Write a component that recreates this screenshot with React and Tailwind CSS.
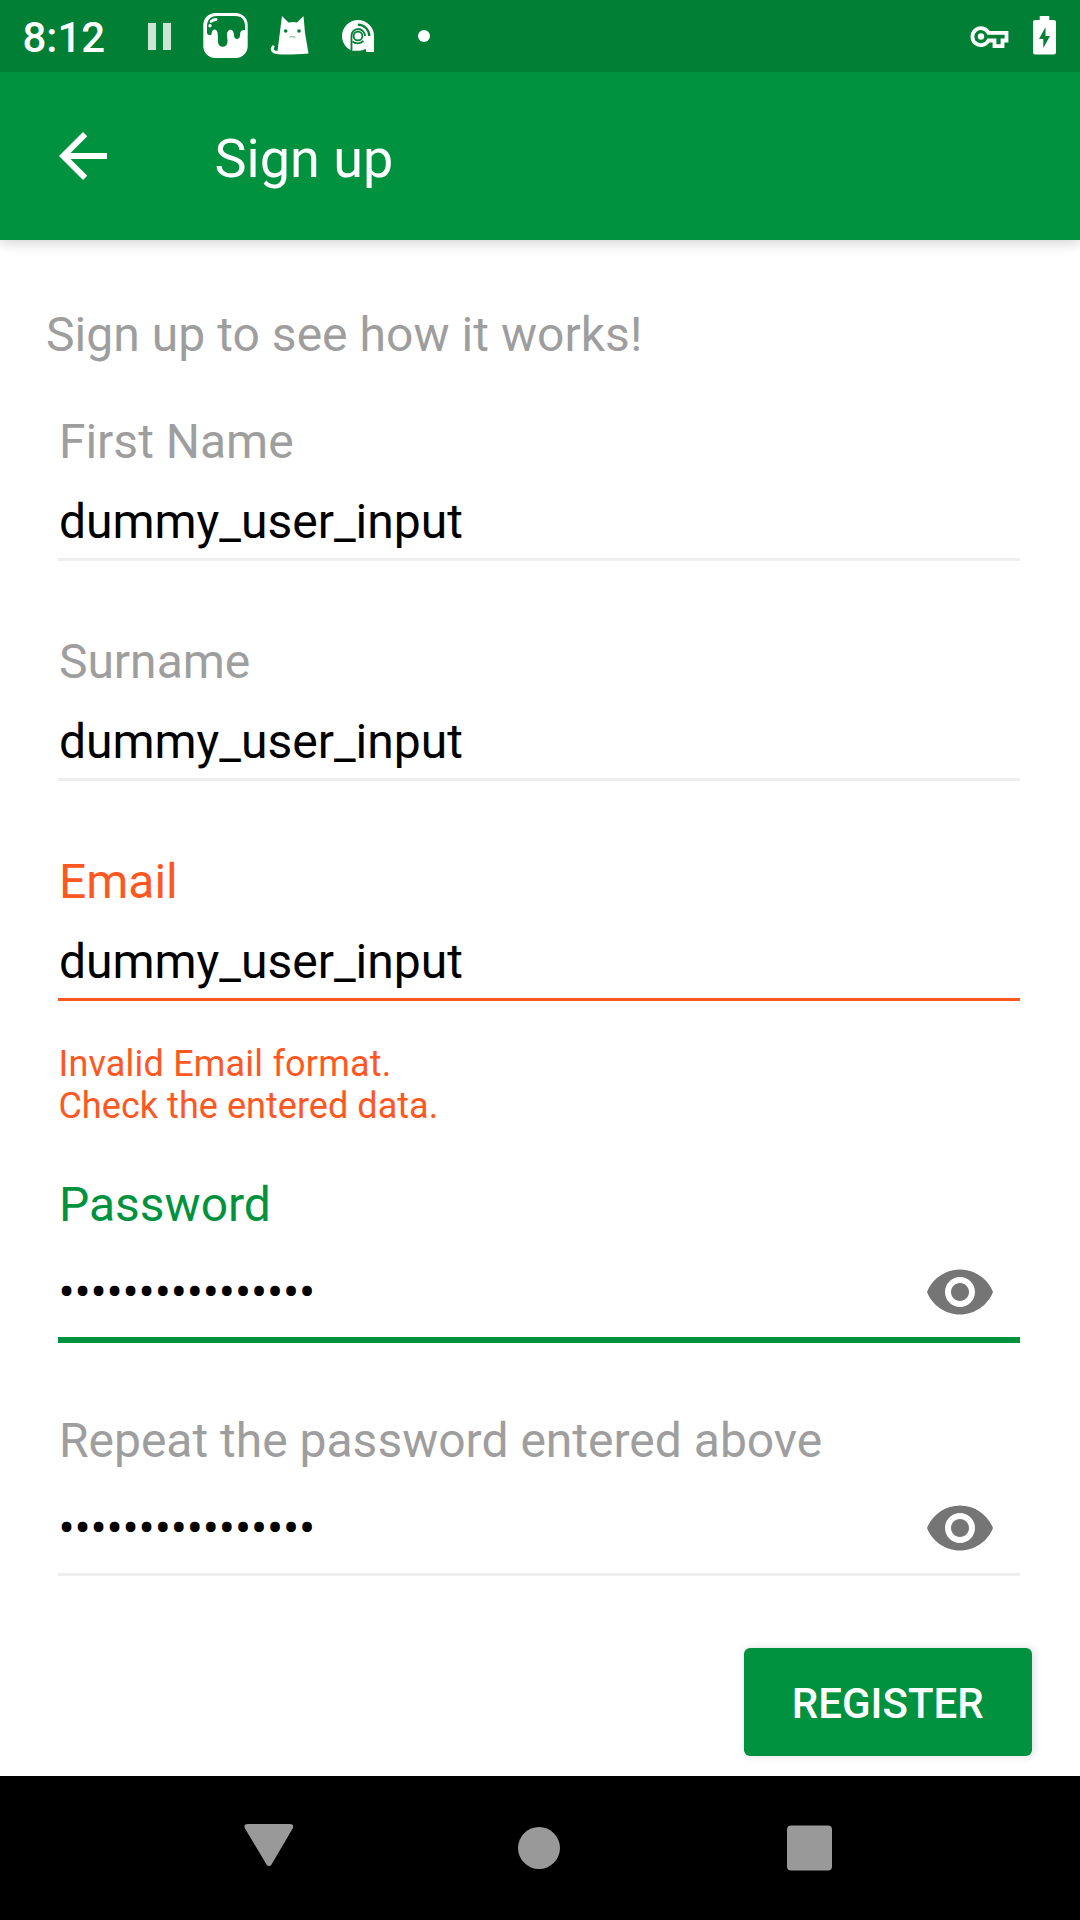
const labelTones = {
  idle: 'text-[#9e9e9e]',
  error: 'text-[#ff5722]',
  active: 'text-[#00923f]',
};

const lineTones = {
  idle: 'h-[3px] bg-[#eeeeee]',
  error: 'h-[3px] bg-[#ff5722]',
  active: 'h-[6px] bg-[#00923f]',
};

function StatusBar() {
  return (
    <header className="relative z-10 flex h-[72px] items-center bg-[#007f35] text-white">
      <div className="ml-[22.500px] w-[125.500px] pt-[3px] text-[42px] leading-[48px] font-medium">8:12</div>
      <svg className="h-[72px] w-[24px] shrink-0" viewBox="148 0 24 72" fill="#cce5d7">
        <path d="M148 23h8v27h-8zM163 23h8v27h-8z" />
      </svg>
      <svg className="ml-[30px] h-[72px] w-[48px] shrink-0" viewBox="202 0 48 72">
        <rect x="203.300" y="13" width="44.400" height="45" rx="12" fill="#fff" />
        <path
          d="M207 27c0-7 3-11 10-11h18c7 0 10 4 10 10v4c-4 0-5 2-5 5.500 0 4.500-6 4.500-6 0 0-8-7-7-7-1 0 3 .5 4 .5 7 0 7-9.500 7-9.500 0l-.2-7c-.3-7-6.300-6-6.300 0-1 1.500-4.500.5-4.500-2z"
          fill="#007f35"
        />
        <path d="M211 21.500q2.500-2 5-2" fill="none" stroke="#fff" strokeWidth="2.800" strokeLinecap="round" />
        <circle cx="210" cy="25.700" r="1.700" fill="#fff" />
      </svg>
      <svg className="ml-[20px] h-[72px] w-[40px] shrink-0" viewBox="270 0 40 72">
        <path
          d="M282 16l6.500 6.500q5.500-1.200 8.500 0l6.500-6.500 1.500 17 3.500 20.500q-19 1.500-30 .8c-8-.4-9.800-6-5.500-9.300l1.800 1.600c-2.500 2.800 0 4.200 2.700 4.400z"
          fill="#fff"
        />
        <circle cx="285.700" cy="31" r="1.800" fill="#007f35" />
        <circle cx="299" cy="31" r="1.800" fill="#007f35" />
        <path d="M289.500 37.300q1.500-1.300 3-.3 1.500-1 3 .3" fill="none" stroke="#68ae84" strokeWidth="1" />
      </svg>
      <svg className="ml-[30px] h-[72px] w-[36px] shrink-0" viewBox="340 0 36 72">
        <path d="M358 20a16 16 0 0 1 16 16v16h-16a16 16 0 0 1 0-32z" fill="#fff" />
        <g fill="none" stroke="#007f35">
          <path d="M351.500 52V36a6.500 6.500 0 0 1 6.500-6.800" strokeWidth="1.800" />
          <circle cx="358" cy="36" r="4.400" strokeWidth="1.800" />
          <path d="M358 29a7 7 0 0 1 7 7" strokeWidth="1.800" />
          <path d="M358 24.700a11.300 11.300 0 0 1 11.300 11.300" strokeWidth="2.200" />
          <path d="M352.500 41.500q5 4 11-.5" strokeWidth="1.800" />
        </g>
        <path d="M353 50.700h6q4 0 6.500-2l1 4h-13.500z" fill="#007f35" />
      </svg>
      <svg className="ml-[41px] h-[72px] w-[14px] shrink-0" viewBox="417 0 14 72">
        <circle cx="424" cy="36" r="6" fill="#fff" />
      </svg>
      <svg className="ml-auto h-[72px] w-[40px] shrink-0" viewBox="970 0 40 72">
        <path
          d="M988.500 32.800h18v7.700h-4v5.700h-8v-5.700h-6a8.500 8.500 0 1 1 0-7.700z"
          fill="none"
          stroke="#fff"
          strokeWidth="3.800"
        />
        <circle cx="981" cy="36.500" r="3.200" fill="#fff" />
      </svg>
      <svg className="mr-[20px] ml-[20px] h-[72px] w-[30px] shrink-0" viewBox="1030 0 30 72">
        <path
          fillRule="evenodd"
          d="M1039.700 16h9.600v4h4.500q2.200 0 2.200 2v30.500q0 2-2.200 2h-18.600q-2.200 0-2.200-2v-30.500q0-2 2.200-2h4.500zM1045.500 27l-6.500 12h4.300v9l6.700-12h-4.500z"
          fill="#fff"
        />
      </svg>
    </header>
  );
}

function AppBar() {
  return (
    <div className="flex h-[168px] items-center bg-[#00923f] text-white shadow-[0_3px_12px_rgba(0,0,0,0.18)]">
      <button aria-label="Back" className="ml-[46.500px]">
        <svg className="block h-[72px] w-[72px]" viewBox="0 0 24 24" fill="currentColor">
          <path d="M20 11H7.830l5.590-5.590L12 4l-8 8 8 8 1.410-1.410L7.830 13H20v-2z" />
        </svg>
      </button>
      <h1 className="ml-[96px] pt-[5px] text-[54px] leading-[64px] font-normal">Sign up</h1>
    </div>
  );
}

function EyeIcon() {
  return (
    <svg className="h-[72px] w-[72px]" viewBox="0 0 24 24" fill="#757575">
      <path d="M12 4.500C7 4.500 2.730 7.610 1 12c1.730 4.390 6 7.500 11 7.500s9.270-3.110 11-7.500c-1.730-4.390-6-7.500-11-7.500zM12 17c-2.760 0-5-2.240-5-5s2.240-5 5-5 5 2.240 5 5-2.240 5-5 5zm0-8c-1.660 0-3 1.340-3 3s1.340 3 3 3 3-1.340 3-3-1.340-3-3-3z" />
    </svg>
  );
}

function Field({ label, value, tone = 'idle', secret = false }) {
  return (
    <div>
      <div className={`h-14 pl-[0.500px] text-[48px] leading-[56px] ${labelTones[tone]}`}>{label}</div>
      {secret ? (
        <div className="flex h-[104px] items-center justify-between pt-[13px] pr-[24px]">
          <span className="pt-[2px] text-[48px] leading-[56px] tracking-[-0.150px] text-black">{value}</span>
          <button aria-label="Show password">
            <EyeIcon />
          </button>
        </div>
      ) : (
        <div className="mt-6 mb-2 h-14 pl-[0.500px] text-[48px] leading-[56px] text-black">{value}</div>
      )}
      <div className={lineTones[tone]} />
    </div>
  );
}

function NavBar() {
  return (
    <nav className="flex h-36 items-center bg-black pl-[244px]">
      <svg className="h-[144px] w-[50px]" viewBox="244 1776 50 144">
        <path d="M248 1824h41.500q5 0 3.200 4.500l-21.200 36q-2.500 3.500-5 0l-21.500-36q-2-4.500 3-4.500z" fill="#999" />
      </svg>
      <svg className="ml-[223px] h-[144px] w-[44px]" viewBox="517 1776 44 144">
        <circle cx="539" cy="1848" r="21" fill="#999" />
      </svg>
      <svg className="ml-[225px] h-[144px] w-[48px]" viewBox="786 1776 48 144">
        <rect x="787" y="1825.500" width="45" height="45" rx="4" fill="#999" />
      </svg>
    </nav>
  );
}

export default function App() {
  return (
    <div className="flex h-[1920px] w-[1080px] flex-col overflow-hidden bg-white font-['Roboto',sans-serif]">
      <StatusBar />
      <AppBar />
      <main className="flex flex-1 flex-col">
        <p className="mt-[67px] ml-[46px] h-14 text-[48px] leading-[56px] tracking-[0.040px] text-[#9e9e9e]">
          Sign up to see how it works!
        </p>
        <form className="mt-[51px] mr-[60px] ml-[58.400px] flex flex-col">
          <Field label="First Name" value="dummy_user_input" />
          <div className="mt-[73px]">
            <Field label="Surname" value="dummy_user_input" />
          </div>
          <div className="mt-[73px]">
            <Field label="Email" value="dummy_user_input" tone="error" />
          </div>
          <p className="mt-[42px] text-[36px] leading-[42px] text-[#ff5722]">
            <span className="tracking-[0.200px]">Invalid Email format.</span>
            <br />
            <span className="tracking-[0.050px]">Check the entered data.</span>
          </p>
          <div className="mt-[50px]">
            <Field label="Password" value="••••••••••••••••" tone="active" secret />
          </div>
          <div className="mt-[70px]">
            <Field label="Repeat the password entered above" value="••••••••••••••••" secret />
          </div>
        </form>
        <button className="mt-[72px] mr-[48px] h-[108px] w-[288.500px] self-end rounded-[6px] bg-[#00923f] pt-[2px] text-[42px] font-medium text-white shadow-[2px_0_8px_rgba(0,0,0,0.14)]">
          REGISTER
        </button>
      </main>
      <NavBar />
    </div>
  );
}
